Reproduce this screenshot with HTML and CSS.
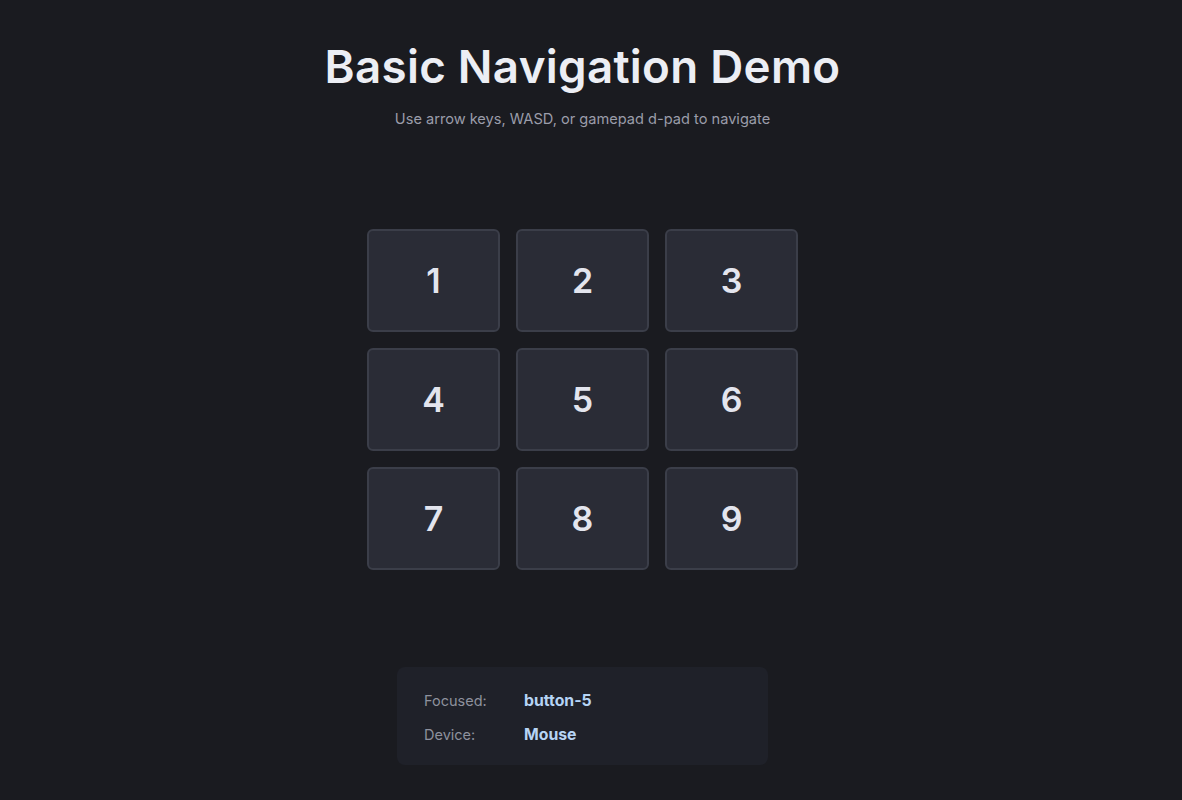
FILE: index.html
```html
<!DOCTYPE html>
<html>
<head>
<meta charset="utf-8">
<link rel="stylesheet" href="styles.css">
</head>
<body>
<main class="page">
  <h1 class="title">Basic Navigation Demo</h1>
  <p class="subtitle">Use arrow keys, WASD, or gamepad d-pad to navigate</p>
  <div class="grid">
    <button class="cell">1</button>
    <button class="cell">2</button>
    <button class="cell">3</button>
    <button class="cell">4</button>
    <button class="cell">5</button>
    <button class="cell">6</button>
    <button class="cell">7</button>
    <button class="cell">8</button>
    <button class="cell">9</button>
  </div>
  <div class="info">
    <div class="row"><span class="label">Focused:</span><span class="value">button-5</span></div>
    <div class="row"><span class="label">Device:</span><span class="value">Mouse</span></div>
  </div>
</main>
</body>
</html>
```
FILE: styles.css
```css
html, body {
  margin: 0;
  padding: 0;
  background: #1a1b20;
  height: 100%;
}
body {
  font-family: Inter, "Noto Sans", sans-serif;
  color: #e8e9ef;
}
.page {
  display: flex;
  flex-direction: column;
  align-items: center;
  padding-top: 38px;
  padding-right: 17px;
}
.title {
  margin: 0;
  font-size: 45.7px;
  font-weight: 600;
  line-height: 58px;
  letter-spacing: 0.3px;
  color: #eceef4;
}
.subtitle {
  margin: 13px 0 0;
  font-size: 14.6px;
  line-height: 20px;
  color: #9b9daa;
}
.grid {
  margin-top: 100px;
  display: grid;
  grid-template-columns: repeat(3, 133px);
  grid-auto-rows: 103px;
  gap: 16px 16px;
}
.cell {
  box-sizing: border-box;
  background: #2a2c36;
  border: 2px solid #3b3e49;
  border-radius: 6px;
  font-family: Inter, "Noto Sans", sans-serif;
  font-size: 34px;
  font-weight: 600;
  color: #e3e5ee;
  padding: 0;
}
.info {
  box-sizing: border-box;
  margin-top: 97px;
  width: 371px;
  height: 98px;
  background: #1f2129;
  border-radius: 8px;
  padding: 24px 27px 20px;
  display: flex;
  flex-direction: column;
  gap: 14px;
}
.row {
  display: flex;
  align-items: baseline;
  line-height: 20px;
}
.label {
  width: 100px;
  font-size: 14.5px;
  color: #8e919d;
}
.value {
  font-size: 15.8px;
  color: #b6d4f5;
  font-weight: 700;
}
```
